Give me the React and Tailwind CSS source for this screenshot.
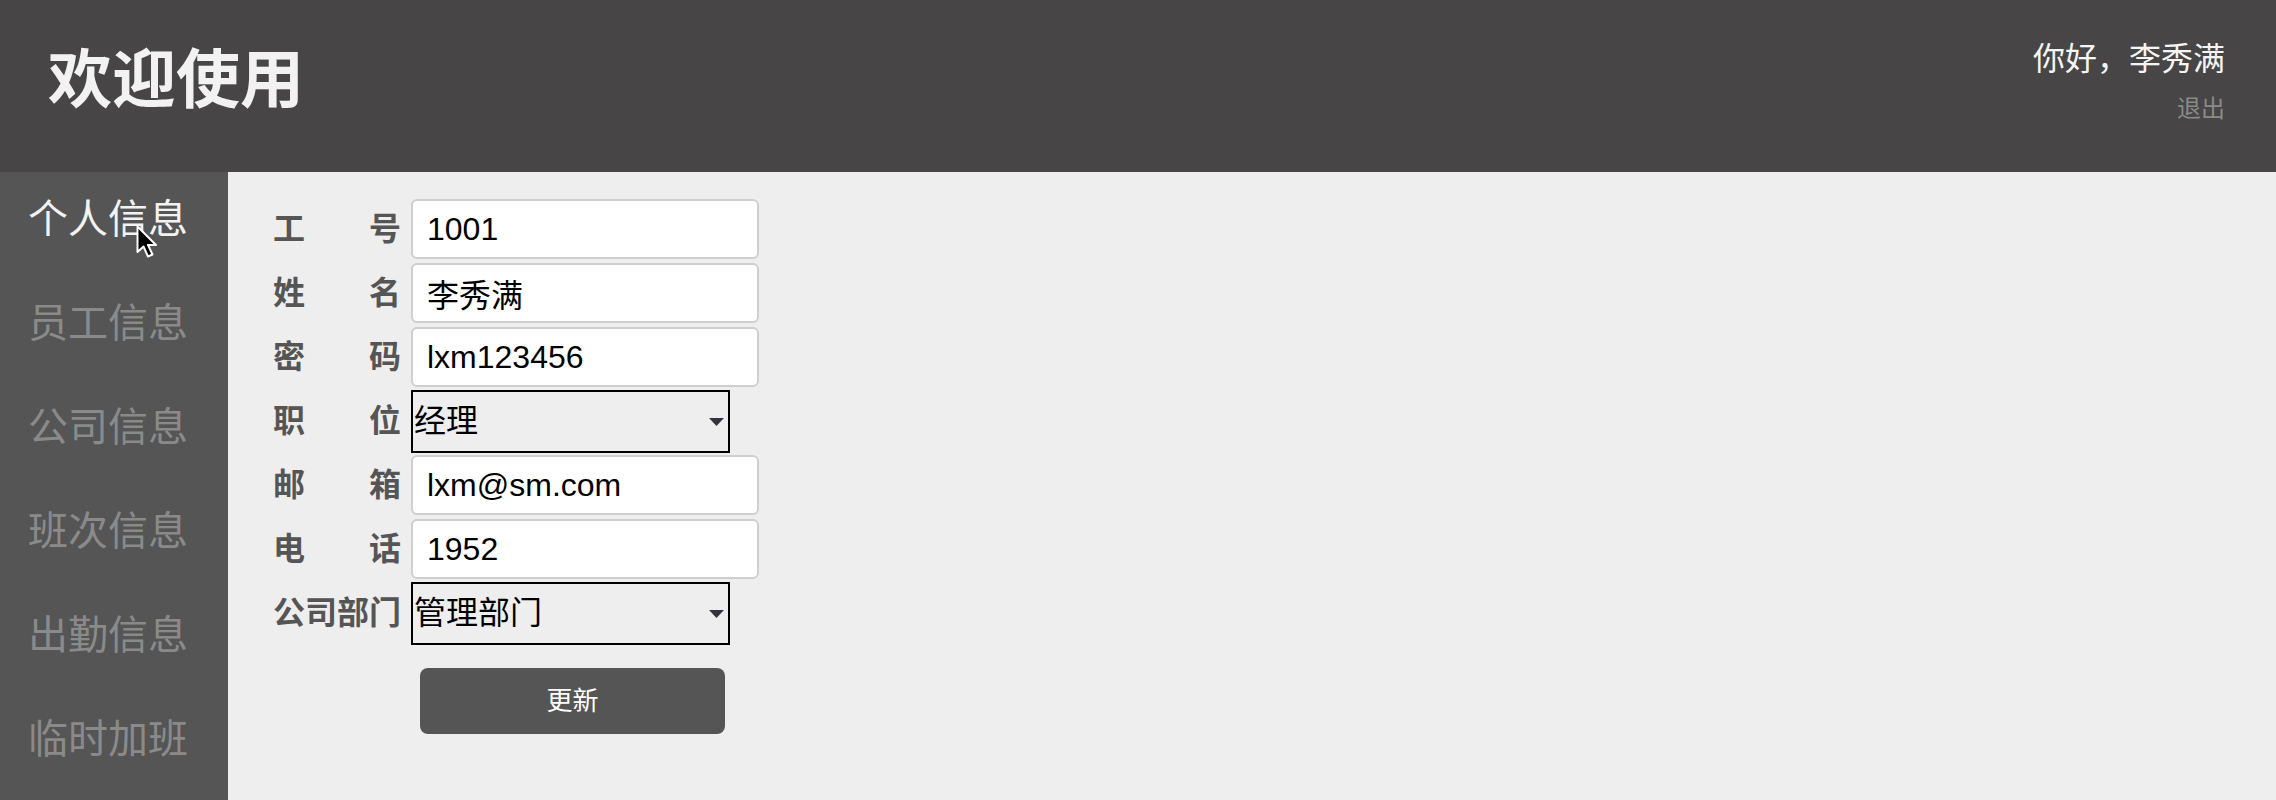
import React from 'react';

const navItems = ['个人信息', '员工信息', '公司信息', '班次信息', '出勤信息', '临时加班'];

function Label({ text }) {
  // two-char labels are spread across the full width
  if (text.length === 2) {
    return (
      <div className="w-[128px] flex justify-between text-[32px] leading-[40px] font-bold text-[#555]">
        <span>{text[0]}</span>
        <span>{text[1]}</span>
      </div>
    );
  }
  return <div className="w-[128px] text-[32px] leading-[40px] font-bold text-[#555]">{text}</div>;
}

function InputRow({ label, value }) {
  return (
    <div className="h-[64px] flex items-center">
      <Label text={label} />
      <input
        defaultValue={value}
        className="ml-[10px] w-[348px] h-[60px] border-2 border-[#cfcfcf] rounded-[6px] bg-white px-[14px] text-[32px] text-black outline-none"
      />
    </div>
  );
}

function SelectRow({ label, value }) {
  return (
    <div className="h-[64px] flex items-center">
      <Label text={label} />
      <div className="relative ml-[10px]">
        <select
          defaultValue={value}
          className="appearance-none w-[319px] h-[63px] border-2 border-black bg-[#eee] pl-[1px] text-[32px] text-black outline-none"
        >
          <option>{value}</option>
        </select>
        <svg className="absolute right-[6px] top-[28px] pointer-events-none" width="15" height="8" viewBox="0 0 15 8">
          <path d="M0 0 H15 L7.5 8 Z" fill="#33333f" />
        </svg>
      </div>
    </div>
  );
}

export default function App() {
  return (
    <div className="min-h-[800px] flex flex-col bg-[#eee] font-['Liberation_Sans','Noto_Sans_CJK_SC',sans-serif]">
      <header className="h-[172px] bg-[#474546] flex justify-between pl-[48px] pr-[51px]">
        <h1 className="pt-[45px] text-[64px] leading-[70px] font-bold text-[#f2f2f2]">欢迎使用</h1>
        <div className="pt-[39px] text-right">
          <div className="text-[32px] leading-[40px] text-[#f5f5f5]">你好，李秀满</div>
          <div className="mt-[14px] text-[24px] leading-[32px] text-[#8a8a8a]">退出</div>
        </div>
      </header>

      <div className="flex flex-1">
        <nav className="w-[228px] bg-[#555]">
          {navItems.map((item, i) => (
            <div key={item} className="relative h-[104px] pt-[27px] pl-[28px]">
              <span className={`text-[40px] leading-[40px] ${i === 0 ? 'text-[#f2f2f2]' : 'text-[#8a8a8a]'}`}>{item}</span>
              {i === 0 && (
                <svg className="absolute left-[136px] top-[53px]" width="24" height="34" viewBox="0 0 24 34">
                  <path d="M1.5 1.5 V27 L7.5 21.5 L12 31.5 L16.5 29.5 L12 20 H20 Z" fill="#000" stroke="#fff" strokeWidth="2" strokeLinejoin="round" />
                </svg>
              )}
            </div>
          ))}
        </nav>

        <main className="flex-1 pl-[45px] pt-[25px]">
          <InputRow label="工号" value="1001" />
          <InputRow label="姓名" value="李秀满" />
          <InputRow label="密码" value="lxm123456" />
          <SelectRow label="职位" value="经理" />
          <InputRow label="邮箱" value="lxm@sm.com" />
          <InputRow label="电话" value="1952" />
          <SelectRow label="公司部门" value="管理部门" />
          <button className="mt-[23px] ml-[147px] w-[305px] h-[66px] rounded-[8px] bg-[#555] text-white text-[26px]">
            更新
          </button>
        </main>
      </div>
    </div>
  );
}
